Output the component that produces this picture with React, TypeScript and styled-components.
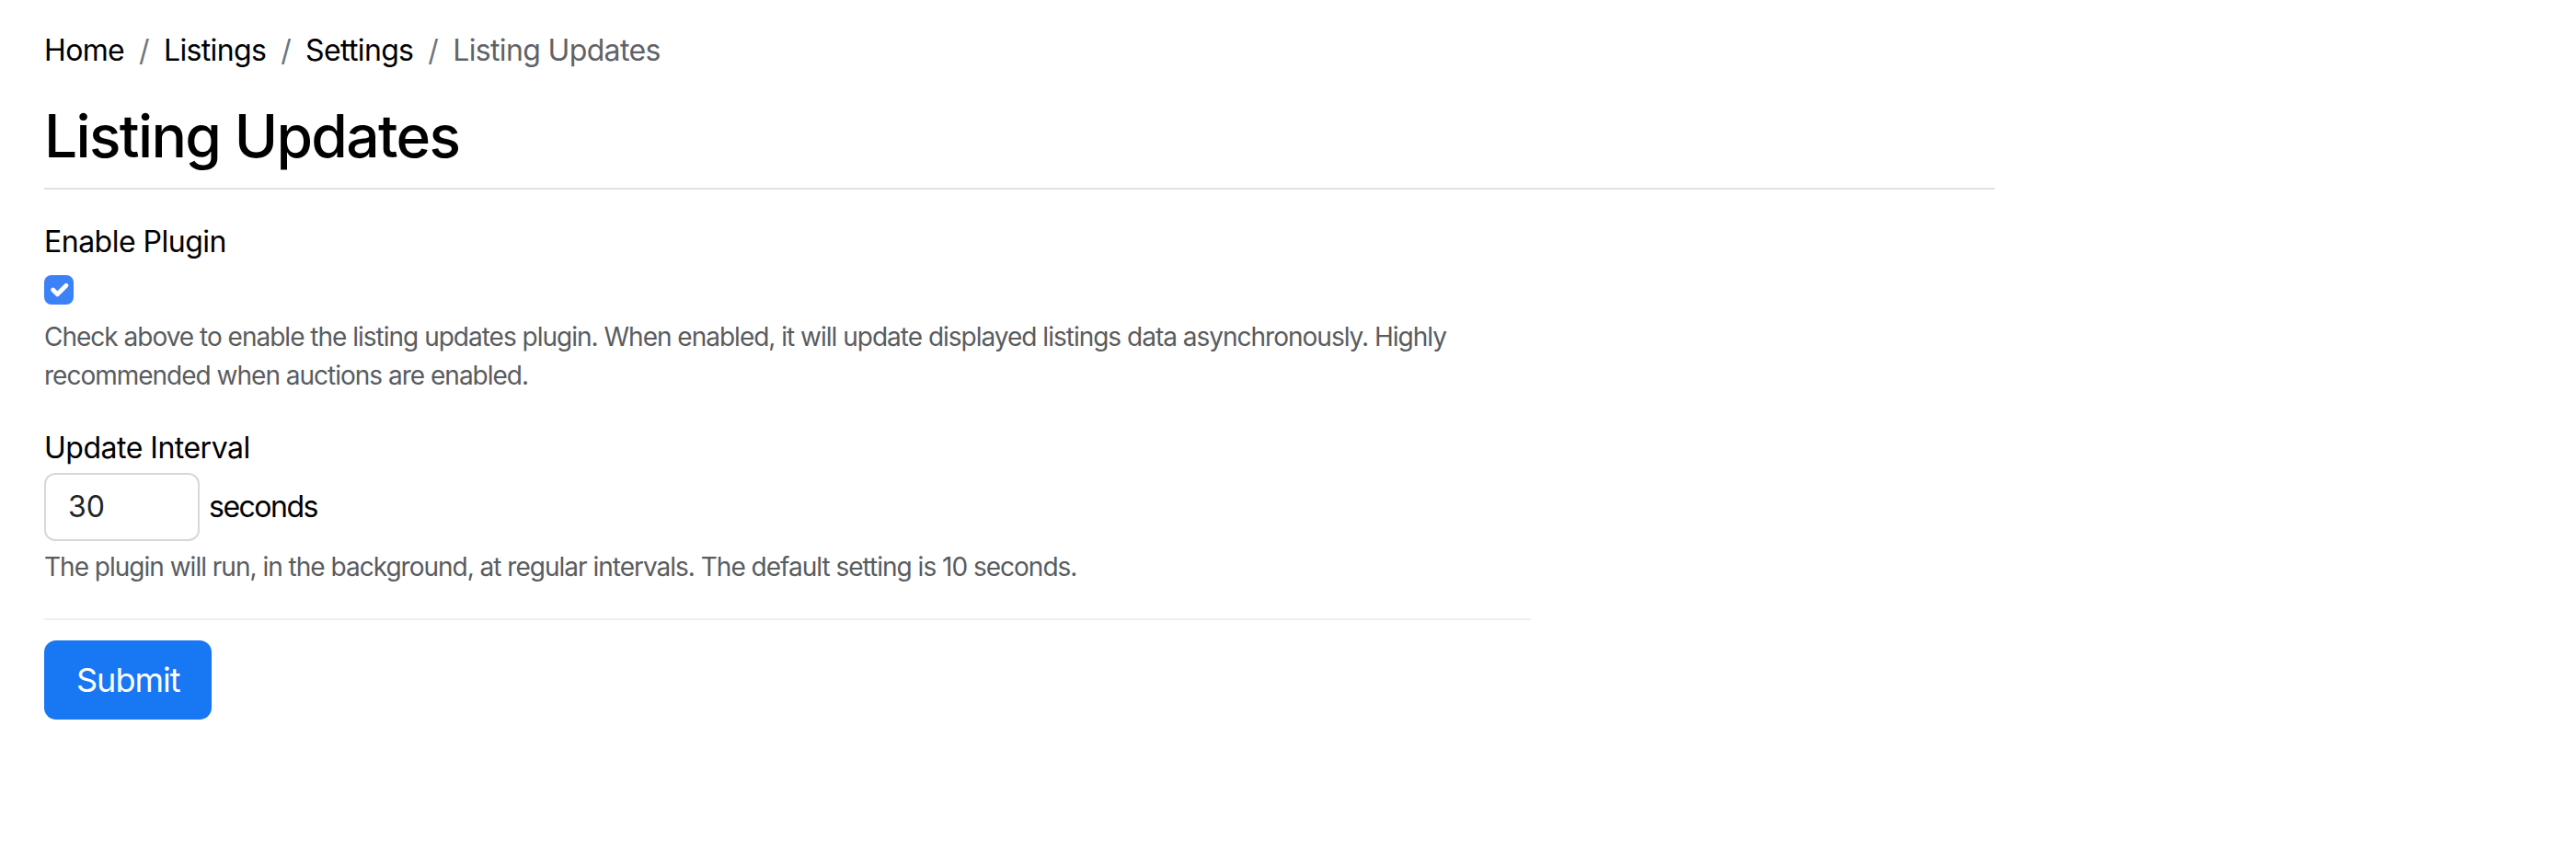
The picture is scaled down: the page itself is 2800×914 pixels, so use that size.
import React from "react";
import styled, { createGlobalStyle } from "styled-components";

const GlobalStyle = createGlobalStyle`
  html, body {
    margin: 0;
    padding: 0;
    background: #ffffff;
  }
  body {
    font-family: Inter, "Noto Sans", "Liberation Sans", sans-serif;
    color: #000000;
    -webkit-font-smoothing: antialiased;
  }
  * { box-sizing: border-box; }
`;

const Page = styled.div`
  padding: 31px 48px 0 48px;
`;

const Container = styled.div`
  width: 2120px;
`;

const Breadcrumb = styled.nav`
  display: flex;
  align-items: center;
  font-size: 32px;
  line-height: 48px;
  letter-spacing: -0.65px;
  margin-bottom: 31px;
`;

const Crumb = styled.span<{ $active?: boolean }>`
  color: ${(p) => (p.$active ? "#5f6368" : "#000000")};
`;

const Sep = styled.span`
  color: #6c757d;
  padding: 0 16px;
`;

const HeadingWrap = styled.div`
  padding-bottom: 17px;
  border-bottom: 2px solid #e1e1e1;
`;

const Heading = styled.h1`
  margin: 0;
  font-size: 64px;
  line-height: 76.8px;
  font-weight: 500;
  letter-spacing: -1.65px;
`;

const Form = styled.form`
  width: 1616px;
`;

const Group = styled.div<{ $top: number }>`
  margin-top: ${(p) => p.$top}px;
`;

const Label = styled.label`
  display: block;
  font-size: 32px;
  line-height: 48px;
  font-weight: 400;
  letter-spacing: -0.5px;
`;

const CheckRow = styled.div`
  margin-top: 4px;
  min-height: 48px;
  display: flex;
  align-items: flex-start;
`;

const CheckBox = styled.span`
  margin-top: 8px;
  width: 32px;
  height: 32px;
  border-radius: 8px;
  background: #3b82f6;
  display: flex;
  align-items: center;
  justify-content: center;
`;

const HelpText = styled.div<{ $top: number }>`
  margin-top: ${(p) => p.$top}px;
  font-size: 28px;
  line-height: 42px;
  letter-spacing: -1px;
  color: #595c5f;
`;

const InputRow = styled.div`
  margin-top: 3px;
  display: flex;
  align-items: center;
  gap: 10px;
`;

const NumberInput = styled.div`
  width: 169px;
  height: 74px;
  border: 2px solid #d5d8dc;
  border-radius: 12px;
  padding: 11px 24px;
  font-size: 32px;
  line-height: 48px;
  color: #212529;
`;

const Unit = styled.span`
  font-size: 32px;
  line-height: 48px;
  letter-spacing: -1.5px;
`;

const Divider = styled.hr`
  margin: 35px 0 22px 0;
  border: 0;
  border-top: 2px solid #efefef;
`;

const SubmitButton = styled.button`
  font-family: inherit;
  font-size: 36px;
  line-height: 54px;
  font-weight: 400;
  letter-spacing: -1px;
  padding: 16px 35px;
  border: 0;
  border-radius: 13px;
  background: #1877f2;
  color: #ffffff;
`;

export default function App() {
  return (
    <>
      <GlobalStyle />
      <Page>
        <Container>
          <Breadcrumb>
            <Crumb>Home</Crumb>
            <Sep>/</Sep>
            <Crumb>Listings</Crumb>
            <Sep>/</Sep>
            <Crumb>Settings</Crumb>
            <Sep>/</Sep>
            <Crumb $active>Listing Updates</Crumb>
          </Breadcrumb>
          <HeadingWrap>
            <Heading>Listing Updates</Heading>
          </HeadingWrap>
          <Form onSubmit={(e) => e.preventDefault()}>
            <Group $top={33}>
              <Label>Enable Plugin</Label>
              <CheckRow>
                <CheckBox>
                  <svg width="32" height="32" viewBox="0 0 20 20" fill="none">
                    <path
                      d="m6 10 3 3 6-6"
                      stroke="#ffffff"
                      strokeWidth="3"
                      strokeLinecap="round"
                      strokeLinejoin="round"
                    />
                  </svg>
                </CheckBox>
              </CheckRow>
              <HelpText $top={6}>
                Check above to enable the listing updates plugin. When enabled, it will update displayed
                listings data asynchronously. Highly recommended when auctions are enabled.
              </HelpText>
            </Group>
            <Group $top={34}>
              <Label>Update Interval</Label>
              <InputRow>
                <NumberInput>30</NumberInput>
                <Unit>seconds</Unit>
              </InputRow>
              <HelpText $top={7}>
                The plugin will run, in the background, at regular intervals. The default setting is 10
                seconds.
              </HelpText>
            </Group>
            <Divider />
            <SubmitButton type="submit">Submit</SubmitButton>
          </Form>
        </Container>
      </Page>
    </>
  );
}
